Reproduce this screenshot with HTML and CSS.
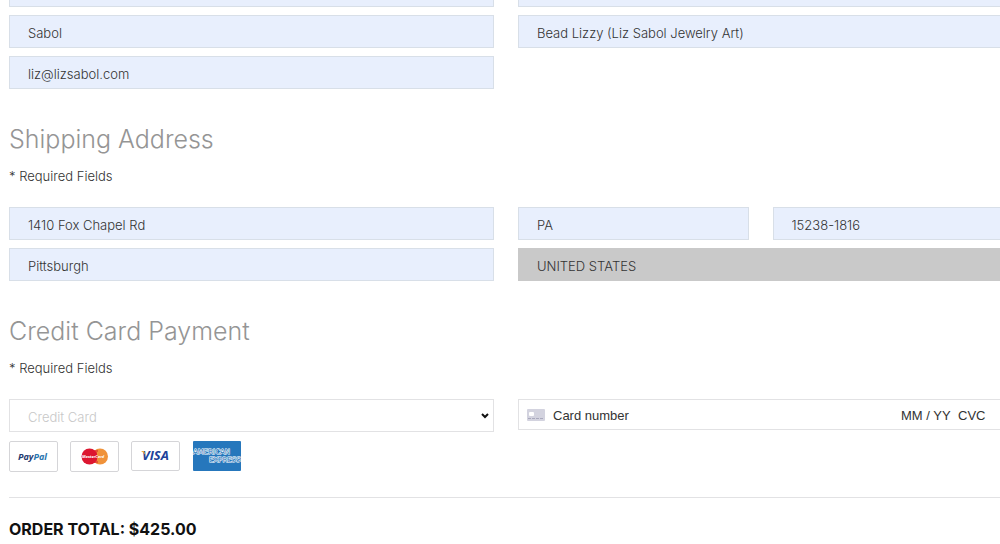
FILE: index.html
```
<!DOCTYPE html>
<html lang="en">
<head>
    <meta charset="UTF-8">
    <title>Checkout</title>
    <link rel="stylesheet" href="styles.css">
</head>
<body>
    <form class="checkout">
        <section class="fields">
            <input class="field" type="text" aria-label="First name">
            <input class="field" type="text" aria-label="Phone">
            <input class="field" type="text" aria-label="Last name" value="Sabol">
            <input class="field" type="text" aria-label="Company" value="Bead Lizzy (Liz Sabol Jewelry Art)">
            <input class="field" type="email" aria-label="Email" value="liz@lizsabol.com">
        </section>

        <h2>Shipping Address</h2>
        <p class="required">* Required Fields</p>
        <section class="fields">
            <input class="field" type="text" aria-label="Address" value="1410 Fox Chapel Rd">
            <div class="split">
                <input class="field" type="text" aria-label="State" value="PA">
                <input class="field" type="text" aria-label="Zip code" value="15238-1816">
            </div>
            <input class="field" type="text" aria-label="City" value="Pittsburgh">
            <input class="field locked" type="text" aria-label="Country" value="UNITED STATES" readonly>
        </section>

        <h2>Credit Card Payment</h2>
        <p class="required">* Required Fields</p>
        <section class="fields">
            <div class="select">
                <select class="field method" aria-label="Payment method">
                    <option>Credit Card</option>
                </select>
                <svg class="arrow" viewBox="0 0 8 6" aria-hidden="true">
                    <path d="M1 1l3 3 3-3" fill="none" stroke="#111" stroke-width="2"/>
                </svg>
            </div>
            <div class="card">
                <svg class="card-icon" viewBox="0 0 18 12" aria-hidden="true">
                    <rect width="18" height="12" rx="1" fill="#d3d3df"/>
                    <rect x="2" y="3" width="5" height="4" rx="1" fill="#fff"/>
                    <path d="M1 9.5h16" stroke="#a9a9bd" stroke-dasharray="3 1"/>
                </svg>
                <input class="number" type="text" aria-label="Card number" placeholder="Card number">
                <input class="expiry" type="text" aria-label="Expiry date" placeholder="MM / YY">
                <input class="cvc" type="text" aria-label="CVC" placeholder="CVC">
            </div>
        </section>

        <div class="logos">
            <svg class="logo" viewBox="0 0 49 31" role="img" aria-label="PayPal">
                <rect x=".5" y=".5" width="48" height="30" rx="1.5" fill="#fff" stroke="#d5d5d8"/>
                <text class="paypal" x="9" y="19"><tspan fill="#253b70">Pay</tspan><tspan fill="#2875ae">Pal</tspan></text>
            </svg>
            <svg class="logo" viewBox="0 0 49 31" role="img" aria-label="MasterCard">
                <rect x=".5" y=".5" width="48" height="30" rx="1.5" fill="#fff" stroke="#d5d5d8"/>
                <circle cx="30" cy="15.500" r="8" fill="#f0923a"/>
                <circle cx="19.500" cy="15.500" r="8" fill="#dc1630"/>
                <path d="M24 10h4M23 12h4M23 19h4M24 21h4" stroke="#dc1630"/>
                <text class="mastercard" x="12" y="17">MasterCard</text>
            </svg>
            <svg class="logo" viewBox="0 0 49 31" role="img" aria-label="Visa">
                <rect x=".5" y=".5" width="48" height="29" rx="1.5" fill="#fff" stroke="#d5d5d8"/>
                <text class="visa" x="11" y="19">VISA</text>
                <path d="M10 10h3l2 5c-1-2-3-4-5-5z" fill="#e9aa3c"/>
            </svg>
            <svg class="logo" viewBox="0 0 49 31" role="img" aria-label="American Express">
                <rect x="1" y="0" width="48" height="30" rx="1" fill="#2677bc"/>
                <text class="amex" x="1" y="13">AMERICAN</text>
                <text class="amex" x="17" y="21">EXPRESS</text>
            </svg>
        </div>

        <p class="total">ORDER TOTAL: $425.00</p>
    </form>
</body>
</html>
```
FILE: styles.css
```
* {
    box-sizing: border-box;
}

body {
    margin: 0;
    overflow: hidden;
    background: #fff;
    color: #333;
    font-family: Inter, "Liberation Sans", sans-serif;
    font-size: 13px;
    font-weight: 300;
}

.checkout {
    margin: -26px -3px 0 9px;
}

.fields {
    display: grid;
    grid-template-columns: 1fr 1fr;
    gap: 8px 24px;
    align-items: start;
}

.split {
    display: grid;
    grid-template-columns: 1fr 1fr;
    gap: 24px;
}

.field {
    display: block;
    width: 100%;
    min-width: 0;
    height: 33px;
    margin: 0;
    padding: 2px 18px 0;
    border: 1px solid #d8dfe8;
    border-radius: 0;
    background: #e8effd;
    color: #333;
    font: inherit;
}

.locked {
    border-color: #c9c9c9;
    background: #c9c9c9;
}

.select {
    position: relative;
}

.method {
    appearance: none;
    border-color: #e2e2e4;
    background: #fff;
    color: #c8c8c8;
}

.arrow {
    position: absolute;
    top: 14px;
    right: 5px;
    width: 8px;
    height: 6px;
    pointer-events: none;
}

h2 {
    margin: 32px 0 0;
    color: #959595;
    font-size: 25px;
    font-weight: 300;
    line-height: 36px;
}

.required {
    margin: 8px 0 20px;
    line-height: 22px;
}

.card {
    display: flex;
    align-items: center;
    height: 31px;
    padding: 1px 16px 0 8px;
    border: 1px solid #e2e2e4;
}

.card input {
    min-width: 0;
    padding: 0;
    border: 0;
    background: none;
    color: #333;
    font: 400 13px "Liberation Sans", Arial, sans-serif;
}

.card input::placeholder {
    color: #333;
    opacity: 1;
}

.card-icon {
    flex: none;
    width: 18px;
    height: 12px;
    margin-right: 8px;
}

.number {
    flex: 1;
}

.expiry {
    width: 57px;
}

.cvc {
    width: 28px;
}

.logos {
    display: flex;
    gap: 12px;
    padding: 9px 0 25px;
    border-bottom: 1px solid #e2e2e4;
}

.logo {
    width: 49px;
    height: 31px;
}

.paypal {
    font: italic 700 9px "Open Sans", sans-serif;
}

.mastercard {
    fill: #fff;
    font: italic 700 4px "Open Sans", sans-serif;
}

.visa {
    fill: #20429a;
    font: italic 700 13px "Open Sans", sans-serif;
}

.amex {
    fill: #2677bc;
    stroke: #fff;
    stroke-width: 1px;
    paint-order: stroke;
    font: 400 7px "DejaVu Sans", sans-serif;
}

.total {
    margin: 20px 0 0;
    color: #111;
    font-size: 16px;
    font-weight: 700;
    line-height: 22px;
}
```
